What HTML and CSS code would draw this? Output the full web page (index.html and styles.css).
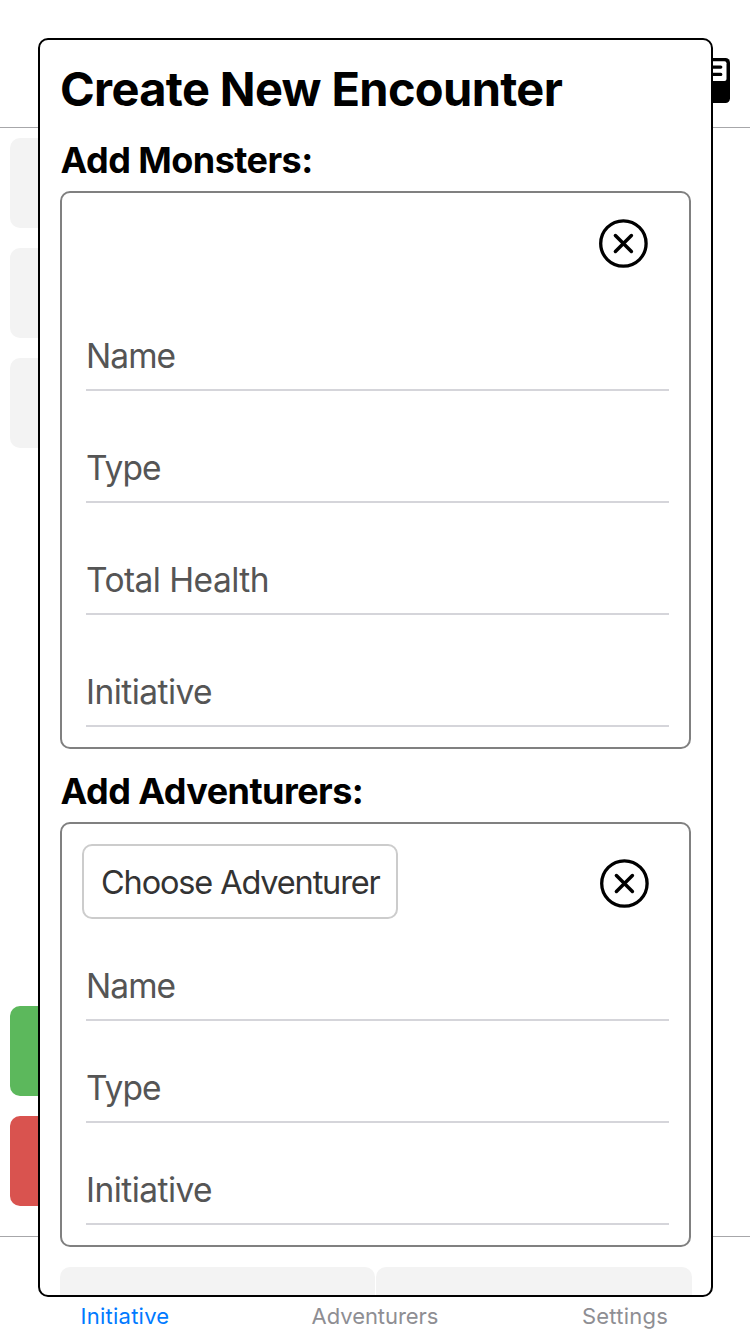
FILE: index.html
```
<!DOCTYPE html>
<html lang="en">
<head>
<meta charset="utf-8">
<title>Initiative</title>
<link rel="stylesheet" href="styles.css">
</head>
<body>
<div class="screen">
  <header class="topbar">
    <svg class="book" width="40" height="46" viewBox="0 0 40 46">
      <rect x="0" y="0" width="40" height="45" rx="4.5" fill="#000"/>
      <rect x="3.5" y="3.3" width="33" height="19.8" rx="2" fill="#fff"/>
      <path d="M10 9.1H30.8M10 16.4H30.8" stroke="#000" stroke-width="3.2" stroke-linecap="round"/>
    </svg>
  </header>
  <main class="content">
    <div class="row"></div>
    <div class="row"></div>
    <div class="row"></div>
    <div class="actions">
      <div class="row row-go"></div>
      <div class="row row-stop"></div>
    </div>
  </main>
  <nav class="tabs">
    <a class="tab tab-active">Initiative</a>
    <a class="tab tab-long">Adventurers</a>
    <a class="tab">Settings</a>
  </nav>

  <section class="modal">
    <h1 class="title">Create New Encounter</h1>
    <h2 class="subtitle">Add Monsters:</h2>
    <div class="card card-monster">
      <div class="card-head">
        <svg class="close" width="50" height="50" viewBox="0 0 50 50" fill="none" stroke="#000">
          <circle cx="25.4" cy="24.5" r="22.7" stroke-width="3.3"/>
          <path d="M17.4 16.5L33.4 32.5M33.4 16.5L17.4 32.5" stroke-width="3.5" stroke-linecap="round"/>
        </svg>
      </div>
      <div class="field">Name</div>
      <div class="field">Type</div>
      <div class="field">Total Health</div>
      <div class="field">Initiative</div>
    </div>
    <h2 class="subtitle">Add Adventurers:</h2>
    <div class="card card-adventurer">
      <div class="card-head">
        <div class="select">Choose Adventurer</div>
        <svg class="close" width="50" height="50" viewBox="0 0 50 50" fill="none" stroke="#000">
          <circle cx="25.4" cy="25.5" r="22.7" stroke-width="3.3"/>
          <path d="M17.4 17.5L33.4 33.5M33.4 17.5L17.4 33.5" stroke-width="3.5" stroke-linecap="round"/>
        </svg>
      </div>
      <div class="field">Name</div>
      <div class="field">Type</div>
      <div class="field">Initiative</div>
    </div>
    <div class="buttons">
      <div class="button"></div>
      <div class="button"></div>
    </div>
  </section>
</div>
</body>
</html>
```
FILE: styles.css
```
* { box-sizing: border-box; }
body { margin: 0; background: #fff; font-family: Inter, "Liberation Sans", sans-serif; }
.screen { position: relative; width: 750px; height: 1334px; overflow: hidden; display: flex; flex-direction: column; }
.topbar { height: 128px; flex: none; border-bottom: 1px solid #a7a7aa; display: flex; justify-content: flex-end; padding: 58px 20px 0 0; }
.content { flex: 1; display: flex; flex-direction: column; gap: 20px; padding: 10px 50px 30px 10px; }
.row { height: 90px; flex: none; border-radius: 10px; background: #f3f3f3; }
.actions { margin-top: auto; display: flex; flex-direction: column; gap: 20px; }
.row-go { background: #5cb85c; }
.row-stop { background: #d9534f; }
.tabs { height: 98px; flex: none; border-top: 1px solid #a7a7aa; display: grid; grid-template-columns: repeat(3, 1fr); align-items: end; padding-bottom: 4px; }
.tab { font-size: 22px; line-height: 28px; letter-spacing: 0.25px; text-align: center; color: #8e8e93; }
.tab-long { letter-spacing: -0.05px; }
.tab-active { color: #007aff; }

.modal { position: absolute; left: 38px; top: 38px; width: 675px; height: 1259px; border: 2px solid #000; border-radius: 10px; background: #fff; overflow: hidden; padding: 20px 19px 0 20px; }
.title { margin: 0; font-size: 47px; line-height: 58px; font-weight: 700; letter-spacing: -0.66px; white-space: nowrap; }
.subtitle { margin: 20px 0 9px; padding-left: 0.5px; font-size: 36px; line-height: 44px; font-weight: 700; letter-spacing: -0.55px; white-space: nowrap; }
.card { width: 631px; border: 2px solid #808080; border-radius: 10px; padding: 0 20px 0 24px; }
.card-monster { height: 558px; }
.card-adventurer { height: 425px; }
.card-head { display: flex; align-items: flex-start; justify-content: flex-end; }
.card-monster .card-head { height: 130px; padding: 26px 21px 0 0; }
.card-adventurer .card-head { height: 127px; padding: 20px 20px 0 0; justify-content: space-between; }
.card-adventurer .close { margin-top: 14px; }
.select { width: 316px; height: 75px; margin-left: -4px; border: 2px solid #ccc; border-radius: 10px; padding-left: 17px; font-size: 32.5px; line-height: 73px; letter-spacing: -1.15px; color: #333; white-space: nowrap; }
.field { border-bottom: 2px solid #d5d5da; color: #555; font-size: 33.5px; line-height: 45px; letter-spacing: -0.55px; white-space: nowrap; }
.card-monster .field { height: 112px; padding-top: 55px; }
.card-monster .card-head + .field { height: 68px; padding-top: 11px; }
.card-adventurer .field { height: 102px; padding-top: 45px; }
.card-adventurer .card-head + .field { height: 70px; padding-top: 13px; }
.field:nth-child(2), .field:nth-child(3) { letter-spacing: -0.95px; }
.buttons { display: grid; grid-template-columns: 315px 316px; gap: 1px; margin-top: 20px; }
.button { height: 90px; border-radius: 10px; background: #f3f3f3; }
```
